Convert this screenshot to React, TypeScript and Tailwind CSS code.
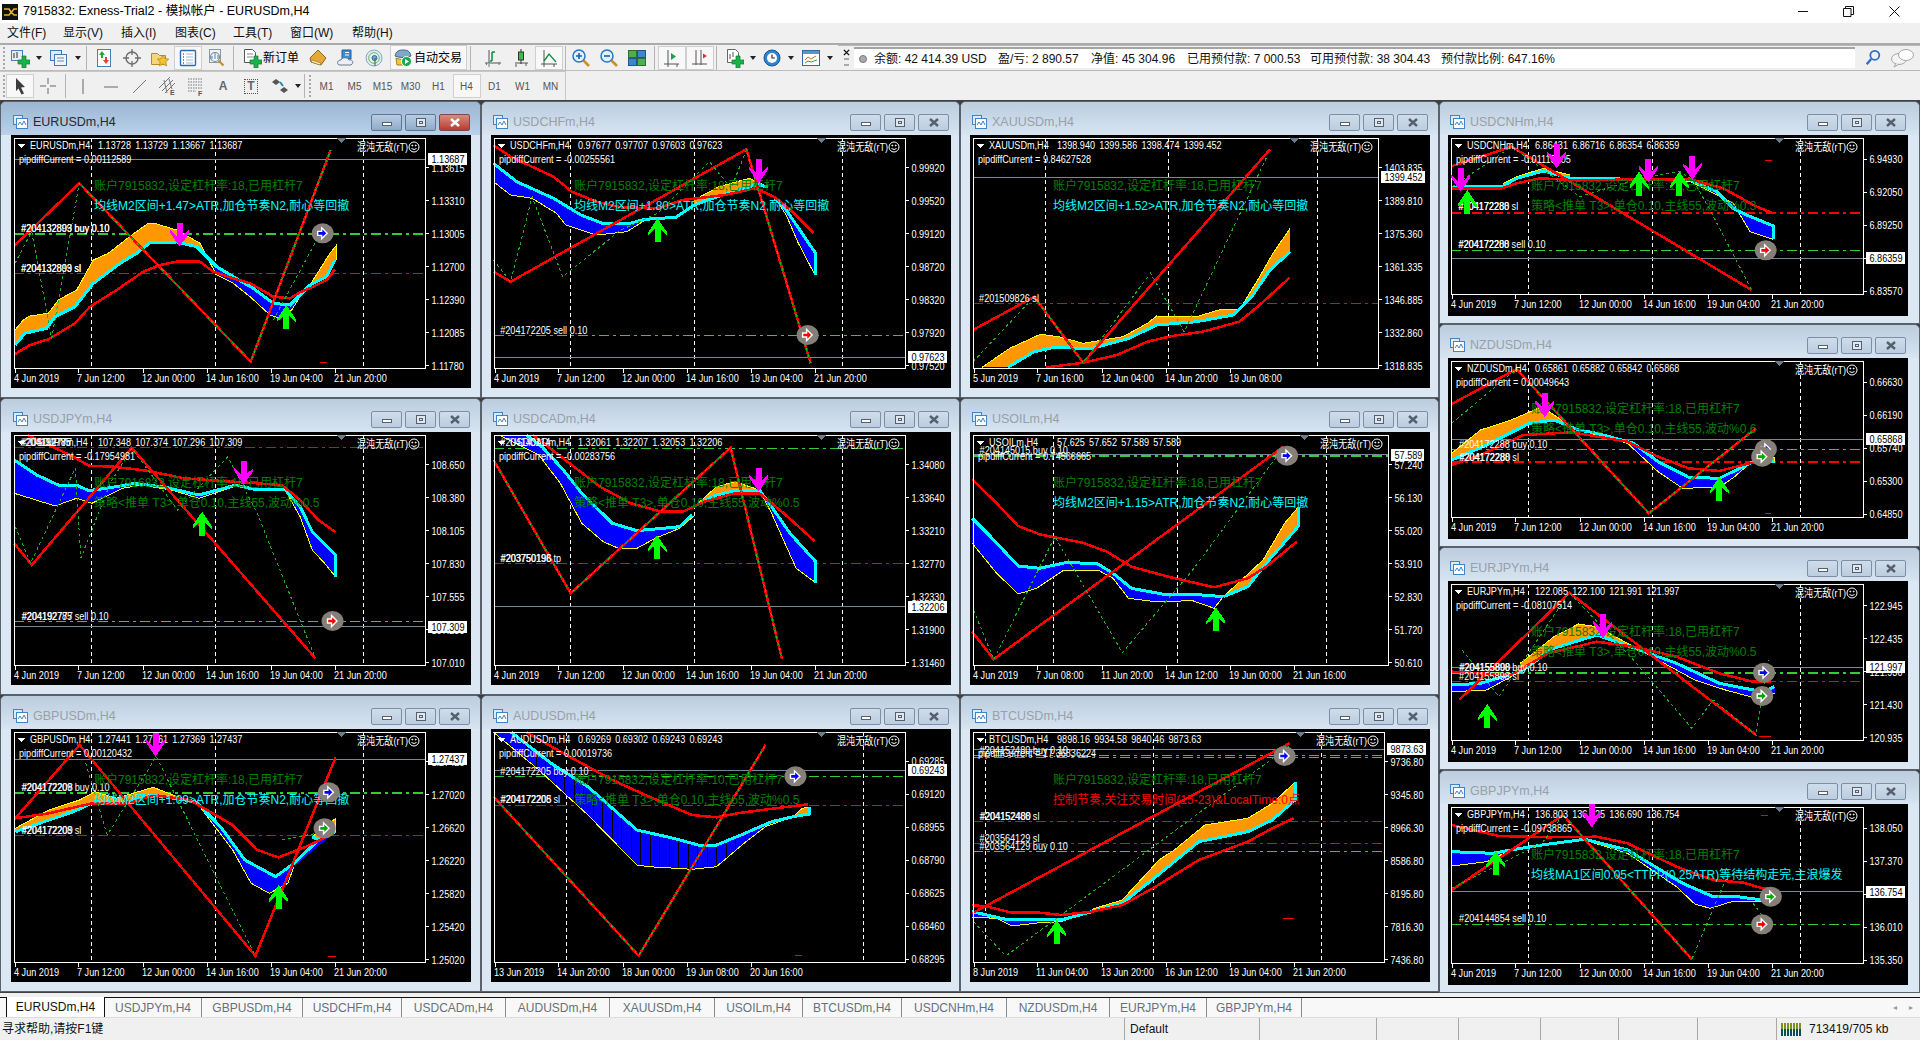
import { ReactNode } from 'react';
import clsx from 'clsx';

type Z = { ox: number; sx: number; oy: number };
const Z4 = { ox: 0, sx: 3, oy: 100 };
const Z7 = { ox: 1440, sx: 3, oy: 100 };
const Z8 = { ox: 480, sx: 1.633, oy: 100 };
const Z9 = { ox: 0, sx: 1.633, oy: 400 };
const Z10 = { ox: 960, sx: 1.633, oy: 400 };
const Z11 = { ox: 0, sx: 1.633, oy: 700 };
const Z12 = { ox: 960, sx: 1.633, oy: 700 };

const colX = [11, 491, 970, 1448];

type HLine = { y: number; c: 'g' | 'r'; w?: number };
type ChartData = {
  sym: string; ohlc: string; pip: string; z: Z;
  col: number; row: number; small?: boolean; right: number;
  bid: string; bidY: number; pStart: number; prices: string[];
  times: string[]; seps: number[];
  hl?: HLine[]; labels?: [string, number, number][];
  zig: string; dots?: string[]; ma: string;
  o?: [string, string][]; b?: [string, string][];
  up?: [number, number][]; down?: [number, number][];
  marks?: [number, number, 'b' | 'r' | 'w'][];
  dash?: [number, number, number][];
  acct: string; t2: string; t2c: string; stripes?: [number, number];
};

const T1 = ['4 Jun 2019', '7 Jun 12:00', '12 Jun 00:00', '14 Jun 16:00', '19 Jun 04:00', '21 Jun 20:00'];
const CYAN = '#00ffff';
const DG = '#008000';
const cd = '账户7915832,设定杠杆率:18,已用杠杆7';

const charts: Record<string, ChartData> = {
  EURUSD: {
    sym: 'EURUSDm,H4', ohlc: '1.13728 1.13729 1.13667 1.13687', pip: 'pipdiffCurrent = 0.00112589', z: Z4, col: 0, row: 0, right: 414,
    bid: '1.13687', bidY: 178, pStart: 203, prices: ['1.13615', '1.13310', '1.13005', '1.12700', '1.12390', '1.12085', '1.11780'],
    times: T1, seps: [275, 647, 1090],
    hl: [{ y: 402, c: 'g', w: 2 }, { y: 520, c: 'r' }],
    labels: [['#204132899 buy 0.10', 63, 385], ['#204132803 buy 0.10', 64, 385], ['#204132803 sl', 63, 503], ['#204132899 sl', 64, 503]],
    zig: '45,435 238,250 752,785 992,150', dots: ['45,490 95,395 155,715 238,250 752,785 992,150', '820,660 950,420'],
    ma: '45,762 90,735 145,718 225,670 270,620 350,570 430,515 480,495 530,485 600,485 640,515 700,535 750,550 820,590 870,595 900,577 940,560 980,540 1005,508',
    o: [['45,690 70,660 90,648 145,640 175,600 230,570 280,480 325,460 395,405 445,370 470,372 530,390 600,430 620,470', '45,735 75,700 140,685 165,650 225,620 280,550 360,490 410,460 450,428 530,426 590,440 620,470'], ['930,555 990,460 1010,435 1010,480', '930,555 980,530 1005,480']],
    b: [['620,470 650,500 700,530 760,565 820,610 870,615 900,585 930,555', '620,470 650,525 700,550 750,590 810,645 840,655 875,630 900,590 930,555']],
    up: [[859, 615]], down: [[539, 440]], marks: [[968, 400, 'b']], dash: [[960, 982, 787]],
    acct: cd, t2: '均线M2区间+1.47>ATR,加仓节奏N2,耐心等回撤', t2c: CYAN,
  },
  USDJPY: {
    sym: 'USDJPYm,H4', ohlc: '107.348 107.374 107.296 107.309', pip: 'pipdiffCurrent = -0.17954981', z: Z9, col: 0, row: 1, right: 414,
    bid: '107.309', bidY: 680, pStart: 194, prices: ['108.650', '108.380', '108.105', '107.830', '107.555', '107.285', '107.010'],
    times: T1, seps: [150, 352, 594],
    hl: [{ y: 142, c: 'r' }, { y: 664, c: 'g' }],
    labels: [['#204192785', 33, 127], ['#204192777', 35, 127], ['#204192785 sell 0.10', 35, 647], ['#204192777', 36, 647]],
    zig: '23,430 52,495 215,143 515,775', dots: ['25,380 50,490 123,205 132,475 180,250 215,145 290,330 372,170 420,340 515,775'],
    ma: '45,105 120,170 145,197 185,200 240,212 300,235 380,245 460,255 490,300 520,360 548,397',
    b: [['23,180 60,225 95,255 125,255 145,272 190,260 220,250 270,262 325,285 385,255 420,270 465,268', '23,280 50,295 90,318 125,295 150,310 200,265 230,255 280,270 325,295 385,258 420,270 465,268'], ['465,268 490,320 510,395 548,465 548,530', '465,268 490,350 510,450 530,490 548,530']],
    up: [[330, 335]], down: [[398, 255]], marks: [[543, 663, 'r']],
    acct: '账户7916832,设定杠杆率:18,已用杠杆7', t2: '策略<推单 T3>,单仓0.10,主线55,波动%0.5', t2c: DG,
  },
  GBPUSD: {
    sym: 'GBPUSDm,H4', ohlc: '1.27441 1.27461 1.27369 1.27437', pip: 'pipdiffCurrent = 0.00120432', z: Z11, col: 0, row: 2, right: 414,
    bid: '1.27437', bidY: 178, pStart: 185, prices: ['1.27425', '1.27020', '1.26620', '1.26220', '1.25820', '1.25420', '1.25020'],
    times: T1, seps: [150, 352, 594],
    hl: [{ y: 279, c: 'g', w: 2 }, { y: 406, c: 'r' }],
    labels: [['#204172209 buy 0.10', 35, 262], ['#204172208', 36, 262], ['#204172208 sl', 35, 390], ['#204172209', 36, 390]],
    zig: '25,355 130,135 417,768 548,172', dots: ['140,190 175,405 255,170 417,768', '460,420 530,395'],
    ma: '25,355 80,340 150,310 210,310 250,285 310,300 380,375 420,450 455,472 500,440 545,400',
    o: [['25,385 80,330 130,300 155,275 190,295 250,262 290,290 320,305', '25,395 80,360 120,335 155,305 200,310 250,285 320,305'], ['510,410 548,355 548,395', '510,410 520,420 548,395']],
    b: [['320,305 360,380 400,480 450,530 480,490 520,420 545,400', '320,305 380,450 410,550 440,580 470,550 480,500']],
    up: [[455, 555]], down: [[254, 170]], marks: [[530, 385, 'w'], [537, 277, 'b']], dash: [[535, 548, 769]],
    acct: cd, t2: '均线M2区间+1.09>ATR,加仓节奏N2,耐心等回撤', t2c: CYAN,
  },
  USDCHF: {
    sym: 'USDCHFm,H4', ohlc: '0.97677 0.97707 0.97603 0.97623', pip: 'pipdiffCurrent = -0.00255561', z: Z8, col: 1, row: 0, right: 414,
    bid: '0.97623', bidY: 772, pStart: 203, prices: ['0.99920', '0.99520', '0.99120', '0.98720', '0.98320', '0.97920', '0.97520'],
    times: T1, seps: [148, 351, 592],
    hl: [{ y: 706, c: 'g' }],
    labels: [['#204172205 sell 0.10', 33, 689]],
    zig: '22,515 50,545 435,148 540,790', dots: ['22,480 50,545 85,290 135,530 230,390 290,340 375,185 410,265 435,150 540,790'],
    ma: '22,135 50,170 120,230 150,275 190,305 230,322 290,325 330,300 400,285 450,265 480,290 510,335 545,400',
    o: [['350,300 390,260 440,235 470,260', '350,315 400,282 450,255 470,260']],
    b: [['22,190 60,245 120,295 165,345 200,370 240,372 270,358 320,352 350,315', '22,245 50,285 85,295 125,340 140,375 190,405 240,395 270,360 320,352 350,315'], ['480,290 500,330 548,460 548,525', '480,290 500,345 520,430 547,525']],
    up: [[290, 355]], down: [[455, 250]], marks: [[535, 705, 'r']],
    acct: cd, t2: '均线M2区间+1.80>ATR,加仓节奏N2,耐心等回撤', t2c: CYAN,
  },
  USDCAD: {
    sym: 'USDCADm,H4', ohlc: '1.32061 1.32207 1.32053 1.32206', pip: 'pipdiffCurrent = -0.00283756', z: Z9, col: 1, row: 1, right: 414,
    bid: '1.32206', bidY: 620, pStart: 194, prices: ['1.34080', '1.33640', '1.33210', '1.32770', '1.32330', '1.31900', '1.31460'],
    times: T1, seps: [932, 1134, 1376],
    hl: [{ y: 145, c: 'g' }, { y: 490, c: 'r' }],
    labels: [['#204140114', 817, 127], ['#203750198 tp', 817, 473], ['#203750196', 818, 473]],
    zig: '806,180 932,580 1193,143 1277,778', dots: ['806,180 932,580 1193,143 1277,778'],
    ma: '870,105 930,190 980,260 1030,310 1080,335 1115,335 1150,305 1200,280 1240,280 1280,340 1330,423',
    o: [['1140,310 1170,260 1200,245 1240,270', '1140,310 1170,285 1200,272 1240,270']],
    b: [['860,105 885,140 920,210 950,280 1000,370 1040,392 1110,380 1130,345', '815,105 880,165 915,250 950,370 985,425 1010,445 1040,445 1070,415 1110,385 1135,345'], ['1240,270 1260,320 1290,400 1332,485 1332,548', '1240,270 1260,340 1300,505 1332,548']],
    up: [[1073, 405]], down: [[1239, 275]],
    acct: cd, t2: '策略<推单 T3>,单仓0.10,主线55,波动%0.5', t2c: DG,
  },
  AUDUSD: {
    sym: 'AUDUSDm,H4', ohlc: '0.69269 0.69302 0.69243 0.69243', pip: 'pipdiffCurrent = 0.00019736', z: Z11, col: 1, row: 2, right: 414,
    bid: '0.69243', bidY: 211, pStart: 184, prices: ['0.69285', '0.69120', '0.68955', '0.68790', '0.68625', '0.68460', '0.68295'],
    times: ['13 Jun 2019', '14 Jun 20:00', '18 Jun 00:00', '19 Jun 08:00', '20 Jun 16:00'], seps: [925, 1410],
    hl: [{ y: 229, c: 'g' }, { y: 316, c: 'r' }],
    labels: [['#204172205 buy 0.10', 817, 212], ['#204172208 sl', 817, 298], ['#204172205', 818, 298]],
    zig: '806,290 1043,767 1250,135', dots: ['806,290 1043,767 1250,135'],
    ma: '860,97 920,160 1000,240 1060,290 1130,345 1170,352 1210,338 1280,322 1320,313',
    o: [['1295,350 1310,325 1322,322', '1295,350 1322,342 1322,322']],
    b: [['835,97 900,190 960,260 1040,390 1100,415 1140,435 1170,435 1210,405 1260,365 1295,350', '806,97 880,210 960,345 1040,495 1060,500 1130,508 1170,500 1215,430 1250,380 1295,350']],
    stripes: [860, 1215], marks: [[1299, 229, 'b']], dash: [[1298, 1310, 766]],
    acct: '账户7915832,设定杠杆率:10,已用杠杆7', t2: '策略<推单 T3>,单仓0.10,主线55,波动%0.5', t2c: DG,
  },
  XAUUSD: {
    sym: 'XAUUSDm,H4', ohlc: '1398.940 1399.586 1398.474 1399.452', pip: 'pipdiffCurrent = 9.84627528', z: Z8, col: 2, row: 0, right: 408,
    bid: '1399.452', bidY: 232, pStart: 203, prices: ['1403.835', '1389.810', '1375.360', '1361.335', '1346.885', '1332.860', '1318.835'],
    times: ['5 Jun 2019', '7 Jun 16:00', '12 Jun 04:00', '14 Jun 20:00', '19 Jun 08:00'], seps: [923, 1125, 1368],
    hl: [{ y: 610, c: 'r' }],
    labels: [['#201509826 sl', 815, 593]],
    zig: '805,690 905,590 985,788 1290,148', dots: ['805,785 905,590 985,788 1095,520 1150,695 1285,170'],
    ma: '925,802 985,788 1040,765 1090,725 1130,708 1180,695 1240,665 1270,620 1322,533',
    o: [['820,802 865,745 915,703 945,710 985,730 1050,710 1090,670 1105,648 1170,650 1210,628 1240,630 1270,540 1295,460 1323,385', '862,802 905,755 935,743 1000,745 1060,715 1105,675 1170,665 1230,645 1260,590 1290,510 1323,455']],
    acct: cd, t2: '均线M2区间+1.52>ATR,加仓节奏N2,耐心等回撤', t2c: CYAN,
  },
  USOIL: {
    sym: 'USOILm,H4', ohlc: '57.625 57.652 57.589 57.589', pip: 'pipdiffCurrent = 0.74566665', z: Z10, col: 2, row: 1, right: 418,
    bid: '57.589', bidY: 164, pStart: 194, prices: ['57.240', '56.130', '55.020', '53.910', '52.830', '51.720', '50.610'],
    times: ['4 Jun 2019', '7 Jun 08:00', '11 Jun 20:00', '14 Jun 12:00', '19 Jun 00:00', '21 Jun 16:00'], seps: [153, 355, 598],
    hl: [{ y: 168, c: 'g', w: 2 }],
    labels: [['#204145015 buy 0.10', 32, 150]],
    zig: '20,695 55,778 528,140', dots: ['22,630 55,778 155,410 265,758 380,510 525,150'],
    ma: '20,238 60,310 95,378 130,403 200,428 240,455 280,500 340,530 415,562 470,535 500,500 550,425',
    o: [['430,590 495,480 530,370 553,320', '430,590 470,560 500,490 553,378 553,320']],
    b: [['20,355 50,410 95,498 130,505 175,487 225,492 250,520 280,565 330,582 375,582 430,590', '20,430 60,520 95,582 125,565 170,510 225,510 250,535 275,595 320,605 380,602 415,625 430,590']],
    up: [[418, 622]], marks: [[534, 167, 'b']],
    acct: cd, t2: '均线M2区间+1.15>ATR,加仓节奏N2,耐心等回撤', t2c: CYAN,
  },
  BTCUSD: {
    sym: 'BTCUSDm,H4', ohlc: '9898.16 9934.58 9840.46 9873.63', pip: 'pipdiffCurrent = 17.36836224', z: Z12, col: 2, row: 2, right: 414,
    bid: '9873.63', bidY: 148, pStart: 185, prices: ['9736.80', '9345.80', '8966.30', '8586.80', '8195.80', '7816.30', '7436.80'],
    times: ['8 Jun 2019', '11 Jun 04:00', '13 Jun 20:00', '16 Jun 12:00', '19 Jun 04:00', '21 Jun 20:00'], seps: [42, 316, 590],
    hl: [{ y: 165, c: 'g' }, { y: 172, c: 'g' }, { y: 365, c: 'r' }, { y: 430, c: 'r' }, { y: 454, c: 'g' }],
    labels: [['#204152480 buy 0.10', 32, 150], ['#204152488 sl', 32, 347], ['#204152400', 33, 347], ['#203564129 sl', 32, 413], ['#203564129 buy 0.10', 32, 437]],
    zig: '20,640 538,130', dots: ['22,665 75,768 540,135'],
    ma: '20,615 45,620 85,638 130,638 165,645 215,635 265,615 315,565 390,480 470,425 510,385 545,355',
    o: [['215,628 265,600 325,480 350,450 400,375 470,355 510,310 547,247', '215,635 265,610 320,530 390,425 470,395 510,360 547,300 547,247']],
    b: [['20,635 75,658 130,658 165,660 215,635', '20,652 60,655 85,678 130,668 165,665 215,635']],
    up: [[158, 660]], marks: [[530, 168, 'b']], dash: [[527, 545, 655]],
    acct: cd, t2: '控制节奏,关注交易时间(15-23)&LocalTime:0点', t2c: '#ff0000',
  },
  USDCNH: {
    sym: 'USDCNHm,H4', ohlc: '6.86431 6.86716 6.86354 6.86359', pip: 'pipdiffCurrent = -0.01110205', z: Z7, col: 3, row: 0, small: true, right: 415,
    bid: '6.86359', bidY: 475, pStart: 178, prices: ['6.94930', '6.92050', '6.89250', '6.86410', '6.83570'],
    times: T1, seps: [265, 638, 1081],
    hl: [{ y: 338, c: 'r', w: 2 }, { y: 452, c: 'g' }],
    labels: [['#204172288 sl', 55, 319], ['#204172280', 56, 319], ['#204172288 sell 0.10', 55, 433], ['#204172200', 56, 433]],
    zig: '36,198 215,140 935,570', dots: ['36,260 215,140 420,290 580,240 660,225 720,215 760,240 810,330 935,570'],
    ma: '36,265 185,265 230,250 300,235 400,240 750,238 850,265 950,320 1000,340',
    o: [['190,250 230,230 310,205 390,225', '190,258 230,235 310,213 390,235']],
    b: [['36,262 85,258 190,258', '36,265 85,262 190,258'], ['390,235 750,240 830,275 880,325 920,345 1000,378 1000,418', '390,235 750,244 770,255 880,310 930,395 1000,418']],
    up: [[82, 270], [597, 215], [718, 215]], down: [[62, 275], [350, 205], [625, 248], [757, 240]], marks: [[977, 451, 'r']], dash: [[975, 995, 181]],
    acct: cd, t2: '策略<推单 T3>,单仓0.10,主线55,波动%0.3', t2c: DG,
  },
  NZDUSD: {
    sym: 'NZDUSDm,H4', ohlc: '0.65861 0.65882 0.65842 0.65868', pip: 'pipdiffCurrent = 0.00049643', z: Z10, col: 3, row: 1, small: true, right: 415,
    bid: '0.65868', bidY: 118, pStart: -53, prices: ['0.66630', '0.66190', '0.65740', '0.65300', '0.64850'],
    times: T1, seps: [929, 1131, 1373],
    hl: [{ y: 148, c: 'g' }, { y: 187, c: 'r', w: 2 }],
    labels: [['#204172288 buy 0.10', 815, 131], ['#204172288 sl', 815, 170], ['#204172280', 816, 170]],
    zig: '803,12 909,-93 1125,340 1300,85', dots: ['803,70 909,-93 1125,340 1300,85'],
    ma: '803,195 850,165 920,105 1000,97 1090,125 1140,170 1190,205 1240,213 1290,190 1320,185',
    o: [['803,160 850,90 900,60 950,20 990,70 1010,90', '803,180 860,135 930,70 970,60 1010,90'], ['1290,187 1330,172 1330,185', '1290,187 1330,185']],
    b: [['1010,90 1040,100 1100,130 1140,185 1190,232 1240,235 1290,190', '1010,90 1090,130 1140,215 1180,265 1240,262 1265,230 1290,190']],
    up: [[1240, 230]], down: [[955, 52]], marks: [[1316, 148, 'b'], [1310, 170, 'w']], dash: [[1315, 1325, 340]],
    acct: cd, t2: '策略<推单 T3>,单仓0.10,主线55,波动%0.6', t2c: DG,
  },
  EURJPY: {
    sym: 'EURJPYm,H4', ohlc: '122.085 122.100 121.991 121.997', pip: 'pipdiffCurrent = -0.08107514', z: Z10, col: 3, row: 2, small: true, right: 415,
    bid: '121.997', bidY: 802, pStart: 617, prices: ['122.945', '122.435', '121.930', '121.430', '120.935'],
    times: T1, seps: [929, 1131, 1373],
    hl: [{ y: 818, c: 'g', w: 2 }, { y: 844, c: 'r' }],
    labels: [['#204155898 buy 0.10', 815, 802], ['#204155800', 816, 802], ['#204155898 sl', 815, 828]],
    zig: '815,900 995,578 1300,1005', dots: ['820,750 880,890 995,578 1100,780 1195,985 1230,900 1300,1005 1320,780'],
    ma: '803,815 900,825 960,760 1040,725 1100,740 1170,770 1240,820 1295,845 1325,845',
    o: [['915,790 970,710 1010,672 1040,680 1060,700 1110,750', '915,815 970,745 1040,705 1110,750']],
    b: [['803,855 850,850 915,815', '803,875 860,870 915,815'], ['1110,750 1170,790 1240,850 1310,875 1330,860', '1110,750 1150,790 1200,840 1250,870 1300,895 1330,880']],
    up: [[861, 912]], down: [[1050, 715]], marks: [[1310, 888, 'w'], [1313, 818, 'b']], dash: [[1305, 1325, 1009]],
    acct: cd, t2: '策略<推单 T3>,单仓0.10,主线55,波动%0.5', t2c: DG,
  },
  GBPJPY: {
    sym: 'GBPJPYm,H4', ohlc: '136.803 136.825 136.690 136.754', pip: 'pipdiffCurrent = -0.09738865', z: Z12, col: 3, row: 3, small: true, right: 415,
    bid: '136.754', bidY: 575, pStart: 385, prices: ['138.050', '137.370', '136.690', '136.010', '135.350'],
    times: T1, seps: [929, 1131, 1373],
    hl: [{ y: 673, c: 'g' }],
    labels: [['#204144854 sell 0.10', 815, 655]],
    zig: '803,570 985,345 1195,778', dots: ['803,565 950,430 985,345 1195,778 1250,540', '1295,610 1320,670'],
    ma: '803,375 880,408 960,412 1040,410 1090,430 1170,500 1230,540 1280,548 1310,565 1330,567',
    b: [['803,455 870,460 900,450 950,435 1020,418 1090,450 1180,550 1230,590 1270,590 1330,605', '803,498 860,485 900,450 950,438 1020,420 1090,460 1170,560 1200,612 1225,625 1260,605 1310,605 1330,618']],
    up: [[875, 452]], down: [[1032, 383]], marks: [[1324, 590, 'w'], [1310, 673, 'r']], dash: [[1308, 1320, 346]],
    acct: cd, t2: '均线MA1区间0.05<TTPP(0.25ATR)等待结构走完,主浪爆发', t2c: CYAN,
  },
};

const columns = [
  { w: 'w-[481px]', pl: 'pl-[10px]', pr: 'pr-[9px]', bpr: 'pr-[10px]', names: ['EURUSD', 'USDJPY', 'GBPUSD'] },
  { w: 'w-[479px]', pl: 'pl-[9px]', pr: 'pr-[8px]', bpr: 'pr-[10px]', names: ['USDCHF', 'USDCAD', 'AUDUSD'] },
  { w: 'w-[479px]', pl: 'pl-[9px]', pr: 'pr-[8px]', bpr: 'pr-[10px]', names: ['XAUUSD', 'USOIL', 'BTCUSD'] },
  { w: 'w-[481px]', pl: 'pl-[8px]', pr: 'pr-[11px]', bpr: 'pr-[13px]', names: ['USDCNH', 'NZDUSD', 'EURJPY', 'GBPJPY'] },
];

function pts(z: Z, s: string) {
  return s.split(' ').map((p) => {
    const [a, b] = p.split(',').map(Number);
    return `${(a / z.sx + z.ox).toFixed(1)},${(b / 3 + z.oy).toFixed(1)}`;
  });
}

function Lbl({ x, y, t, fill = '#fff' }: { x: number; y: number; t: string; fill?: string }) {
  return (
    <text transform={`translate(${x},${y}) scale(.83,1)`} fontSize={11} fill={fill}>{t}</text>
  );
}

function Mark({ x, y, k }: { x: number; y: number; k: 'b' | 'r' | 'w' }) {
  const col = k === 'b' ? '#0000ff' : k === 'r' ? '#ff0000' : '#00aa00';
  return (
    <g transform={`translate(${x},${y})`} shapeRendering="geometricPrecision">
      <ellipse rx={11} ry={10} fill="#857f78" />
      <path d="M-5 -2h4v-3.5l5.5 5.5-5.5 5.500v-3.500h-4z" fill={col} stroke="#fff" strokeWidth="1.4" />
    </g>
  );
}

function Chart({ c, id }: { c: ChartData; id: string }) {
  const h = c.small ? 181 : 253;
  const cy = c.small ? 135 + 223 * c.row : 135 + 297 * c.row;
  const cx = colX[c.col];
  const bot = c.small ? 159 : 233;
  const r = c.right;
  const z = c.z;
  const ax = (v: number) => v / z.sx + z.ox;
  const ay = (v: number) => v / 3 + z.oy;
  const timeX = [3, 66, 131, 195, 259, 323];
  const bidA = ay(c.bidY);
  const bidW = c.bid.length * 5.4 + 1;
  return (
    <svg viewBox={`${cx} ${cy} 460 ${h}`} className={clsx('block w-[460px] bg-black', c.small ? 'h-[181px]' : 'h-[253px]')} shapeRendering="crispEdges">
      <defs>
        <clipPath id={id}>
          {c.b?.map(([a, b], i) => <polygon key={i} points={[...pts(z, a), ...pts(z, b).reverse()].join(' ')} />)}
        </clipPath>
      </defs>
      {c.seps.map((s) => (
        <line key={s} x1={ax(s)} x2={ax(s)} y1={cy + 3} y2={cy + bot} stroke="#fff" strokeDasharray="4 3" />
      ))}
      {c.hl?.map((l, i) => (
        <line key={i} x1={cx + 3} x2={cx + r} y1={ay(l.y)} y2={ay(l.y)} stroke={l.c === 'g' ? '#32cd32' : '#ff0000'} strokeWidth={l.w ?? 1} strokeDasharray="10 4 3 4" />
      ))}
      <line x1={cx + 3} x2={cx + r} y1={bidA} y2={bidA} stroke="#778899" />
      {c.o?.map(([a, b], i) => <polygon key={i} points={[...pts(z, a), ...pts(z, b).reverse()].join(' ')} fill="#ff9800" />)}
      {c.b?.map(([a, b], i) => <polygon key={i} points={[...pts(z, a), ...pts(z, b).reverse()].join(' ')} fill="#0000ff" />)}
      {c.stripes && (
        <g clipPath={`url(#${id})`}>
          {Array.from({ length: 24 }, (_, i) => {
            const vx = ax(c.stripes![0]) + i * 9.5;
            return <line key={i} x1={vx} x2={vx} y1={cy} y2={cy + h} stroke="#000" />;
          })}
        </g>
      )}
      {c.o?.map(([a, b], i) => (
        <g key={i} fill="none">
          <polyline points={pts(z, a).join(' ')} stroke="#ffff00" />
          <polyline points={pts(z, b).join(' ')} stroke="#00ffff" strokeWidth={3} />
        </g>
      ))}
      {c.b?.map(([a, b], i) => (
        <g key={i} fill="none">
          <polyline points={pts(z, b).join(' ')} stroke="#ffff00" />
          <polyline points={pts(z, a).join(' ')} stroke="#00ffff" strokeWidth={3} />
        </g>
      ))}
      <polyline points={pts(z, c.ma).join(' ')} fill="none" stroke="#ff0000" strokeWidth={2.5} />
      <polyline points={pts(z, c.zig).join(' ')} fill="none" stroke="#ff0000" strokeWidth={2.5} />
      {c.dots?.map((d, i) => (
        <polyline key={i} points={pts(z, d).join(' ')} fill="none" stroke="#22b022" strokeDasharray="3 3" />
      ))}
      {c.dash?.map(([a, b, y], i) => <line key={i} x1={ax(a)} x2={ax(b)} y1={ay(y)} y2={ay(y)} stroke="#ff0000" />)}
      <rect x={cx + 3.5} y={cy + 3.5} width={r - 3} height={bot - 3} fill="none" stroke="#fff" />
      {c.prices.map((p, i) => {
        const py = ay(c.pStart) + i * 33;
        return (
          <g key={p}>
            <line x1={cx + r} x2={cx + r + 4} y1={py} y2={py} stroke="#fff" />
            <Lbl x={cx + r + 6.5} y={py + 4} t={p} />
          </g>
        );
      })}
      <rect x={cx + r + 3} y={bidA - 6} width={bidW} height={12} fill="#fff" />
      <Lbl x={cx + r + 6.5} y={bidA + 4} t={c.bid} fill="#000" />
      {c.times.map((t, i) => (
        <g key={t}>
          <line x1={cx + timeX[i] + 1} x2={cx + timeX[i] + 1} y1={cy + bot} y2={cy + bot + 5} stroke="#fff" />
          <Lbl x={cx + timeX[i]} y={cy + bot + 14} t={t} />
        </g>
      ))}
      <polygon points={`${cx + 7},${cy + 9} ${cx + 14},${cy + 9} ${cx + 10.5},${cy + 13}`} fill="#fff" />
      <Lbl x={cx + 19} y={cy + 14} t={c.sym} />
      <text transform={`translate(${cx + 87},${cy + 14}) scale(.83,1)`} fontSize={11} fill="#fff" wordSpacing={2}>{c.ohlc}</text>
      <Lbl x={cx + 8} y={cy + 28} t={c.pip} />
      <Lbl x={cx + r - 68} y={cy + 16} t="混沌无敌(rT)" />
      <g shapeRendering="geometricPrecision" transform={`translate(${cx + r - 11},${cy + 12})`} fill="none" stroke="#fff">
        <circle r={5} />
        <circle cx={-1.7} cy={-1.5} r={0.5} fill="#fff" />
        <circle cx={1.7} cy={-1.5} r={0.5} fill="#fff" />
        <path d="M-2.5 1.5q2.5 2 5 0" />
      </g>
      <polygon points={`${cx + r - 88},${cy + 3} ${cx + r - 79},${cy + 3} ${cx + r - 83.5},${cy + 8}`} fill="#6b7b8c" />
      {c.labels?.map(([t, x, y], i) => <Lbl key={i} x={ax(x)} y={ay(y) + 4} t={t} />)}
      <text x={cx + 83} y={cy + 55} fontSize={12} fill={DG}>{c.acct}</text>
      <text x={cx + 83} y={cy + 75} fontSize={12} fill={c.t2c}>{c.t2}</text>
      {c.up?.map(([x, y], i) => {
        const X = ax(x); const Y = ay(y);
        return <polygon key={i} points={`${X},${Y} ${X + 9.5},${Y + 14} ${X + 9.5},${Y + 17} ${X + 3},${Y + 11} ${X + 3},${Y + 24} ${X - 3},${Y + 24} ${X - 3},${Y + 11} ${X - 9.5},${Y + 17} ${X - 9.5},${Y + 14}`} fill="#00ff00" />;
      })}
      {c.down?.map(([x, y], i) => {
        const X = ax(x); const Y = ay(y);
        return <polygon key={i} points={`${X},${Y} ${X + 9.5},${Y - 14} ${X + 9.5},${Y - 17} ${X + 3},${Y - 11} ${X + 3},${Y - 24} ${X - 3},${Y - 24} ${X - 3},${Y - 11} ${X - 9.5},${Y - 17} ${X - 9.5},${Y - 14}`} fill="#ff00ff" />;
      })}
      {c.marks?.map(([x, y, k], i) => <Mark key={i} x={ax(x)} y={ay(y)} k={k} />)}
    </svg>
  );
}

function WinBtn({ children, red, active }: { children: ReactNode; red?: boolean; active?: boolean }) {
  return (
    <div className={clsx(
      'flex h-[17px] w-[31px] items-center justify-center rounded-[2px] border',
      red ? 'border-[#7d4a48] bg-linear-to-b from-[#d98a80] to-[#b8392e]'
        : active ? 'border-[#5f7690] bg-linear-to-b from-[#b9cde3] to-[#8fabc9]'
        : 'border-[#7e8fa3] bg-linear-to-b from-[#cfdcea] to-[#bccde0]',
    )}>{children}</div>
  );
}

function ChildWindow({ name, small, first, col }: { name: string; small: boolean; first: boolean; col: (typeof columns)[number] }) {
  const c = charts[name];
  const xc = first ? '#fff' : '#56606c';
  return (
    <div className={clsx('flex w-full flex-col rounded-t-[6px] border border-[#59626c] bg-[#dbe7f3]', small ? 'h-[223px]' : 'h-[297px]')}>
      <div className={clsx(
        'flex h-[33px] shrink-0 items-center rounded-t-[5px] bg-linear-to-b pt-[7px]',
        col.pl, col.bpr,
        first ? 'from-[#9cb6d3] to-[#b9d1e9]' : 'from-[#bccddf] to-[#d7e4f1]',
      )}>
        <svg viewBox="0 0 15 14" className="ml-[2px] h-[14px] w-[15px] shrink-0">
          <rect x=".5" y=".5" width="9" height="9" fill="#dcebfa" stroke="#3f83c9" />
          <rect x="3.500" y="3.500" width="11" height="10" fill="#fff" stroke="#3f83c9" />
          <path d="M5 10l2-3 2 3 2-4 2 4" fill="none" stroke="#3f83c9" />
        </svg>
        <span className={clsx('ml-[5px] flex-1 text-[12.5px] leading-none', first ? 'text-[#1f2a36]' : 'text-[#98a0a9]')}>{c.sym}</span>
        <div className="flex gap-[3px]">
          <WinBtn active={first}><div className="mt-[3px] h-[4px] w-[10px] border border-[#56606c] bg-white" /></WinBtn>
          <WinBtn active={first}><div className="flex h-[9px] w-[10px] items-center justify-center border border-[#56606c] bg-[#dfe8f2]"><div className="h-[3px] w-[4px] border border-[#56606c]" /></div></WinBtn>
          <WinBtn red={first} active={first}>
            <svg viewBox="0 0 12 9" className="h-[9px] w-[12px]"><path d="M2 1l8 7M10 1L2 8" stroke={xc} strokeWidth="2.4" /></svg>
          </WinBtn>
        </div>
      </div>
      <div className={clsx('flex', col.pl, col.pr)}>
        <div className="border border-[#9aa7b5] border-r-white border-b-white">
          <div className="-m-px"><Chart c={c} id={`cl-${name}`} /></div>
        </div>
      </div>
    </div>
  );
}

function Ic({ children }: { children: ReactNode }) {
  return <svg viewBox="0 0 20 20" className="h-5 w-5">{children}</svg>;
}

const Plus = ({ x = 8, y = 8 }: { x?: number; y?: number }) => (
  <path transform={`translate(${x},${y})`} d="M4 0h4v4h4v4h-4v4H4v-4H0V4h4z" fill="#19b34a" stroke="#0c7a2c" strokeWidth=".7" />
);

const icons: Record<string, ReactNode> = {
  newChart: <Ic><rect x="1.500" y="2.500" width="11" height="10" fill="#e4eefa" stroke="#4a7fbd" /><path d="M4 5v5M7 4v6" stroke="#333" /><Plus /></Ic>,
  profiles: <Ic><rect x="1.500" y="2.500" width="11" height="10" fill="#dfeafa" stroke="#3f79b8" /><rect x="5.500" y="6.500" width="12" height="11" fill="#eef5fc" stroke="#3f79b8" /><path d="M8 10h7M8 13h7" stroke="#7a8694" /></Ic>,
  market: <Ic><rect x="3.500" y="1.500" width="13" height="17" fill="#fff" stroke="#4a7fbd" /><path d="M8 3l3 4H9v3H7V7H5z" fill="#1fa83c" /><path d="M12 16l-3-4h2V9h2v3h2z" fill="#e2461f" /></Ic>,
  data: <Ic><circle cx="10" cy="10" r="6" fill="none" stroke="#6d6d6d" strokeWidth="1.4" /><path d="M10 1v6M10 13v6M1 10h6M13 10h6" stroke="#6d6d6d" strokeWidth="1.3" /></Ic>,
  nav: <Ic><path d="M1.500 5.500h6l2 2h6v9h-14z" fill="#f4d77a" stroke="#b58b27" /><path d="M13 7l1.800 3.600 4 .5-3 2.800.8 4-3.600-2-3.600 2 .8-4-3-2.800 4-.5z" fill="#f1c531" stroke="#a98316" strokeWidth=".7" /></Ic>,
  terminal: <Ic><rect x="2.500" y="2.500" width="15" height="15" rx="1" fill="#fff" stroke="#2c6cb6" strokeWidth="1.4" /><path d="M5 6h1M5 9h1M5 12h1M5 15h1" stroke="#2c6cb6" strokeWidth="1.4" /><path d="M8 6h7M8 9h7M8 12h7M8 15h7" stroke="#9fb8d4" /></Ic>,
  tester: <Ic><rect x="3.500" y="1.500" width="11" height="13" fill="#eef3fa" stroke="#8a97a6" /><path d="M6 8v3M9 5v6M12 7v4" stroke="#5b82ad" /><circle cx="9" cy="9" r="4.500" fill="none" stroke="#7a8aa0" strokeWidth="1.2" /><path d="M12.500 12.500l5 5" stroke="#c7931e" strokeWidth="2.2" /></Ic>,
  order: <Ic><path d="M2.500 1.500h8l3 3v10h-11z" fill="#fff" stroke="#555" /><path d="M5 6h6M5 9h6" stroke="#888" /><Plus /></Ic>,
  editor: <Ic><path d="M10 2l8 8-5 7-10-3-1-4z" fill="#e5a93a" stroke="#8f6718" /><path d="M3 14l9 3 1-2-9-3z" fill="#fbe8b2" stroke="#8f6718" strokeWidth=".6" /></Ic>,
  cloud: <Ic><path d="M6 2h9v9H6z" fill="#3d8dd6" stroke="#1f5f9f" /><path d="M9 4.500h4M9 7h4" stroke="#fff" /><path d="M3 17c-3-2-1-5 2-5 1-3 7-3 8 0 3-1 5 2 3 4l-1 1z" fill="#e9eff5" stroke="#6b7a8a" /></Ic>,
  signal: <Ic><circle cx="10" cy="10" r="8" fill="#dcecf5" stroke="#88a9be" /><circle cx="10" cy="10" r="5.300" fill="#e3f3df" stroke="#74b27d" /><circle cx="10.500" cy="10" r="2.500" fill="#6aa7cf" stroke="#2e6f9e" /><path d="M11 10v8" stroke="#555" /></Ic>,
  auto: <Ic><path d="M2 8c1-5 4-6 8-6s7 1 8 6c-5 2-11 2-16 0z" fill="#7fa8c9" stroke="#45688a" /><path d="M3 10c5 2 10 2 14 0l-1 7H4z" fill="#f1c73e" stroke="#a2801c" /><circle cx="13.500" cy="13.500" r="5" fill="#19a84b" stroke="#fff" /><path d="M12 11l4 2.500-4 2.500z" fill="#fff" /></Ic>,
  bars: <Ic><path d="M6 2v13M2 15h16" stroke="#555" /><path d="M6 16v3M3.500 15v2M16 14v3" stroke="#777" /><path d="M9 13V4M9 4h3M9 13H7" stroke="#0a8f3c" strokeWidth="1.5" /></Ic>,
  candle: <Ic><path d="M4 15h13M5 16v3M15 15v3" stroke="#555" /><path d="M10 1v15" stroke="#333" /><rect x="7.500" y="4" width="5" height="8" fill="#34c04a" stroke="#333" /></Ic>,
  line: <Ic><path d="M5 2v14M2 16h16M5 16v3M15 16v3" stroke="#555" /><path d="M5 13l5-7 7 8" fill="none" stroke="#0a8f3c" strokeWidth="1.3" /></Ic>,
  zoomIn: <Ic><circle cx="8" cy="8" r="6" fill="#dff0ff" stroke="#2676c7" strokeWidth="1.5" /><path d="M5 8h6M8 5v6" stroke="#1a5fb0" strokeWidth="1.6" /><path d="M12.500 12.500l5.500 5.500" stroke="#c8941f" strokeWidth="2.6" /></Ic>,
  zoomOut: <Ic><circle cx="8" cy="8" r="6" fill="#dff0ff" stroke="#2676c7" strokeWidth="1.5" /><path d="M5 8h6" stroke="#1a5fb0" strokeWidth="1.6" /><path d="M12.500 12.500l5.500 5.500" stroke="#c8941f" strokeWidth="2.6" /></Ic>,
  tile: <Ic><rect x="1.500" y="2.500" width="8" height="7" fill="#4cae4f" stroke="#2d6e2f" /><rect x="10.500" y="2.500" width="8" height="7" fill="#3c86d0" stroke="#1f558c" /><rect x="1.500" y="10.500" width="8" height="7" fill="#3c86d0" stroke="#1f558c" /><rect x="10.500" y="10.500" width="8" height="7" fill="#4cae4f" stroke="#2d6e2f" /></Ic>,
  shift: <Ic><path d="M6 2v14M2 16h15M6 16v3M15 16v3" stroke="#555" /><path d="M9 5l5 3.500-5 3.500z" fill="#1aa348" /></Ic>,
  scroll: <Ic><path d="M6 2v15M11 2v15M2 16h15" stroke="#555" /><path d="M17 8l-4-2.500v5z" fill="#d8362a" /></Ic>,
  indic: <Ic><path d="M3.500 1.500h8l3 3v10h-11z" fill="#fff" stroke="#666" /><path d="M6 11V6M9 9V4" stroke="#555" /><Plus /></Ic>,
  clock: <Ic><circle cx="10" cy="10" r="8" fill="#2f83cf" stroke="#17558f" /><circle cx="10" cy="10" r="5" fill="#fff" /><path d="M10 6.500V10h3" fill="none" stroke="#333" strokeWidth="1.2" /></Ic>,
  template: <Ic><rect x="1.500" y="2.500" width="17" height="15" fill="#fff" stroke="#35689f" /><path d="M2 3h16v3H2z" fill="#5b95d1" /><path d="M4 12l3-3 3 2 5-3" fill="none" stroke="#c96f27" /><path d="M4 15l3-2 3 1 6-2" fill="none" stroke="#3aa14b" /></Ic>,
  cursor: <Ic><path d="M6 2l9 9-4 .5 3 6-2.500 1-3-6L6 15z" fill="#3d3d3d" /></Ic>,
  cross: <Ic><path d="M10 2v6M10 12v6M2 10h6M12 10h6" stroke="#666" /></Ic>,
  vline: <Ic><path d="M10 3v15" stroke="#666" /></Ic>,
  hline: <Ic><path d="M3 11h14" stroke="#666" /></Ic>,
  trend: <Ic><path d="M4 17L17 4" stroke="#777" /></Ic>,
  channel: <Ic><path d="M2 12L13 1M5 15L16 4M8 17L18 7M7 4l3 13M12 3l3 10" stroke="#777" /><text x="13" y="19" fontSize="7" fill="#555" fontWeight="700">E</text></Ic>,
  fibo: <Ic><path d="M3 3h14M3 6h14M3 9h14M3 12h14M3 15h8" stroke="#777" strokeDasharray="1.5 1" /><text x="13" y="20" fontSize="7" fill="#555" fontWeight="700">F</text></Ic>,
  tool: <Ic><path d="M6 3l4 3-4 3-4-3zM14 11l4 3-4 3-4-3z" fill="#555" /><path d="M10 6l3 4" stroke="#1b8fb0" strokeWidth="2" /></Ic>,
};

function T({ n, on, ml }: { n: string; on?: boolean; ml?: string }) {
  return (
    <div className={clsx('flex h-[24px] w-[28px] shrink-0 items-center justify-center', ml, on && 'border border-[#cfcfcf] bg-[#f8f8f8]')}>{icons[n]}</div>
  );
}
const DD = ({ w = 'w-[10px]' }: { w?: string }) => (
  <div className={clsx('flex shrink-0 justify-center', w)}><div className="h-0 w-0 border-x-[3px] border-t-[4px] border-x-transparent border-t-[#222]" /></div>
);
const Sep = ({ w = 'w-[7px]' }: { w?: string }) => (
  <div className={clsx('flex h-[24px] shrink-0 justify-center', w)}><div className="h-full w-px bg-[#b4b4b4]" /></div>
);
const Grip = () => <div className="ml-[3px] h-[22px] w-[2px] shrink-0 border-l-2 border-dotted border-[#a8a8a8]" />;

function Toolbar1() {
  return (
    <div className="flex h-[27px] items-center border-t-2 border-[#ababab]">
      <Grip />
      <div className="w-px shrink-0" />
      <T n="newChart" /><DD /><T n="profiles" ml="ml-px" /><DD /><Sep />
      <T n="market" /><T n="data" /><T n="nav" /><T n="terminal" on /><T n="tester" /><Sep />
      <div className="flex w-[65px] shrink-0 items-center pl-[5px]">
        {icons.order}<span className="ml-[1px] text-[12px]">新订单</span>
      </div>
      <T n="editor" ml="ml-[2px]" /><T n="cloud" /><T n="signal" />
      <div className="ml-[2px] flex h-[25px] w-[77px] shrink-0 items-center border border-[#cfcfcf] bg-[#f8f8f8] pl-[2px]">
        {icons.auto}<span className="ml-[1px] text-[12px]">自动交易</span>
      </div>
      <Sep />
      <T n="bars" ml="ml-[5px]" /><T n="candle" /><T n="line" on /><Sep w="w-[4px]" />
      <T n="zoomIn" /><T n="zoomOut" /><T n="tile" /><Sep />
      <T n="shift" on /><T n="scroll" on /><Sep w="w-[4px]" />
      <T n="indic" ml="ml-[2px]" /><DD /><T n="clock" /><DD /><T n="template" ml="ml-px" /><DD />
      <div className="ml-[3px] flex h-[26px] flex-1 items-center border-y border-[#b8b8b8]">
        <div className="flex w-[16px] shrink-0 flex-col items-center">
          <svg viewBox="0 0 8 8" className="h-[7px] w-[7px]"><path d="M1 1l6 6M7 1L1 7" stroke="#111" strokeWidth="1.6" /></svg>
          <div className="mt-[2px] h-[8px] w-[5px] border-y-2 border-[#aaa]" />
        </div>
        <div className="flex h-[21px] w-[1001px] shrink-0 items-center border-t-2 border-[#a4a4a4] bg-white text-[12px] text-[#111]">
          <div className="ml-[5px] mr-[7px] h-[8px] w-[8px] shrink-0 rounded-full border border-[#777] bg-[#aaa]" />
          <span className="w-[124px] shrink-0">余额: 42 414.39 USD</span>
          <span className="w-[93px] shrink-0">盈/亏: 2 890.57</span>
          <span className="w-[96px] shrink-0">净值: 45 304.96</span>
          <span className="w-[123px] shrink-0">已用预付款: 7 000.53</span>
          <span className="w-[131px] shrink-0">可用预付款: 38 304.43</span>
          <span>预付款比例: 647.16%</span>
        </div>
        <svg viewBox="0 0 20 20" className="ml-[9px] h-[18px] w-[18px]"><circle cx="12" cy="7" r="5" fill="none" stroke="#2f6fc0" strokeWidth="2" /><path d="M8 11l-5 6" stroke="#2f6fc0" strokeWidth="2.6" /></svg>
        <svg viewBox="0 0 24 20" className="ml-[8px] h-[20px] w-[24px]"><ellipse cx="9" cy="11" rx="7.500" ry="5.500" fill="#f4f4f4" stroke="#a6a6a6" /><path d="M6 15l-2 4 5-3" fill="#f4f4f4" stroke="#a6a6a6" /><ellipse cx="16" cy="7" rx="7.500" ry="5.500" fill="#fff" stroke="#a6a6a6" /></svg>
      </div>
    </div>
  );
}

function Toolbar2() {
  const tfs = ['M1', 'M5', 'M15', 'M30', 'H1', 'H4', 'D1', 'W1', 'MN'];
  return (
    <div className="flex h-[30px] items-center border-t border-[#bdbdbd]">
      <div className="flex h-full w-[566px] shrink-0 items-center border-t border-r border-[#c6c6c6]">
        <Grip />
        <div className="w-px shrink-0" />
        <T n="cursor" on /><T n="cross" /><Sep />
        <T n="vline" /><T n="hline" /><T n="trend" /><T n="channel" /><T n="fibo" />
        <div className="flex h-[24px] w-[28px] shrink-0 items-center justify-center text-[12px] font-bold text-[#666]">A</div>
        <div className="flex h-[24px] w-[28px] shrink-0 items-center justify-center"><div className="flex h-[15px] w-[14px] items-center justify-center border border-dotted border-[#555] text-[12px] font-bold leading-none text-[#666]">T</div></div>
        <T n="tool" ml="ml-px" /><DD w="w-[8px]" /><Sep w="w-[4px]" />
        <Grip />
        <div className="w-[1.5px] shrink-0" />
        {tfs.map((t) => (
          <div key={t} className={clsx('flex h-[24px] w-[28px] shrink-0 items-center justify-center text-[10px] text-[#555]', t === 'H4' && 'border border-[#cfcfcf] bg-[#f8f8f8]')}>{t}</div>
        ))}
      </div>
    </div>
  );
}

const tabs: [string, string][] = [
  ['USDJPYm,H4', 'w-[97px]'], ['GBPUSDm,H4', 'w-[101px]'], ['USDCHFm,H4', 'w-[99px]'], ['USDCADm,H4', 'w-[104px]'],
  ['AUDUSDm,H4', 'w-[104px]'], ['XAUUSDm,H4', 'w-[105px]'], ['USOILm,H4', 'w-[88px]'], ['BTCUSDm,H4', 'w-[99px]'],
  ['USDCNHm,H4', 'w-[105px]'], ['NZDUSDm,H4', 'w-[103px]'], ['EURJPYm,H4', 'w-[97px]'], ['GBPJPYm,H4', 'w-[95px]'],
];
const menus: [string, string][] = [
  ['文件(F)', 'w-[56px]'], ['显示(V)', 'w-[58px]'], ['插入(I)', 'w-[54px]'], ['图表(C)', 'w-[58px]'],
  ['工具(T)', 'w-[57px]'], ['窗口(W)', 'w-[62px]'], ['帮助(H)', 'w-[60px]'],
];
const statusCells = ['w-[135px]', 'w-[117px]', 'w-[82px]', 'w-[82px]', 'w-[78px]', 'w-[79px]', 'w-[79px]'];

export default function App() {
  return (
    <div className="h-[1040px] w-[1920px] overflow-hidden bg-[#f0f0f0] text-[12px] text-black [font-family:'Liberation_Sans','Noto_Sans_CJK_SC',sans-serif]">
      <div className="flex h-[23px] items-center bg-white">
        <svg viewBox="0 0 16 16" className="ml-[2px] h-[16px] w-[16px] shrink-0">
          <rect width="16" height="16" fill="#111" />
          <path d="M2 5h5l2 3M2 11h5l5-6h3M9 8l3 3h3" fill="none" stroke="#e2b32e" strokeWidth="1.6" />
        </svg>
        <span className="ml-[5px] text-[12.5px]">7915832: Exness-Trial2 - 模拟帐户 - EURUSDm,H4</span>
        <div className="ml-auto flex h-full items-center">
          <div className="mr-[35px] h-px w-[10px] bg-[#111]" />
          <svg viewBox="0 0 11 11" className="mr-[35px] h-[11px] w-[11px]"><path d="M.5 2.500h7.500v8H.5zM2.500 2.500v-2h8v8H8" fill="none" stroke="#111" /></svg>
          <svg viewBox="0 0 11 11" className="mr-[20px] h-[11px] w-[11px]"><path d="M.5 .5l10 10M10.500 .5l-10 10" stroke="#111" /></svg>
        </div>
      </div>
      <div className="flex h-[20px] items-center pl-[7px] text-[12px] text-[#111]">
        {menus.map(([m, w]) => <span key={m} className={clsx('shrink-0', w)}>{m}</span>)}
      </div>
      <Toolbar1 />
      <Toolbar2 />
      <div className="h-px bg-[#404040]" />
      <div className="flex h-[892px] bg-[#404040]">
        {columns.map((col) => (
          <div key={col.names[0]} className={clsx('shrink-0', col.w)}>
            {col.names.map((n) => (
              <ChildWindow key={n} name={n} small={col.names.length === 4} first={n === 'EURUSD'} col={col} />
            ))}
          </div>
        ))}
      </div>
      <div className="h-[4px] bg-[#f0f0f0]" />
      <div className="flex h-[20px] items-stretch border-t border-[#111] bg-[#f8f8f8] pl-[6px] text-[12px] text-[#67717b]">
        <div className="-mt-px flex w-[99px] shrink-0 items-center justify-center border-x border-[#111] bg-white text-[#111]">EURUSDm,H4</div>
        {tabs.map(([t, w]) => (
          <div key={t} className={clsx('flex shrink-0 items-center justify-center border-r border-[#8a8a8a]', w)}>{t}</div>
        ))}
        <div className="ml-auto flex items-center gap-[12px] pr-[7px] text-[8px] text-[#999]">
          <span>◂</span><span>▸</span>
        </div>
      </div>
      <div className="flex h-[23px] items-center border-t border-[#dcdcdc] text-[12px] text-[#111]">
        <span className="w-[1124px] shrink-0 pl-[2px]">寻求帮助,请按F1键</span>
        {statusCells.map((w, i) => (
          <div key={w + i} className={clsx('h-full shrink-0 border-l border-[#a8a8a8] pl-[5px] leading-[22px]', w)}>{i === 0 ? 'Default' : ''}</div>
        ))}
        <div className="flex h-full flex-1 items-center border-l border-[#a8a8a8] pl-[4px]">
          <svg viewBox="0 0 22 13" className="h-[13px] w-[22px] shrink-0">
            <path d="M1 0v13M4 0v13M7 0v13M10 0v13M13 0v13M16 0v13M19 0v13" stroke="#0b4b5c" strokeWidth="2" />
            <path d="M1 0v6M4 0v6M7 0v6M10 0v6M13 0v6M16 0v6M19 0v6" stroke="#7c8f1f" strokeWidth="2" />
          </svg>
          <span className="ml-[6px]">713419/705 kb</span>
        </div>
      </div>
    </div>
  );
}
